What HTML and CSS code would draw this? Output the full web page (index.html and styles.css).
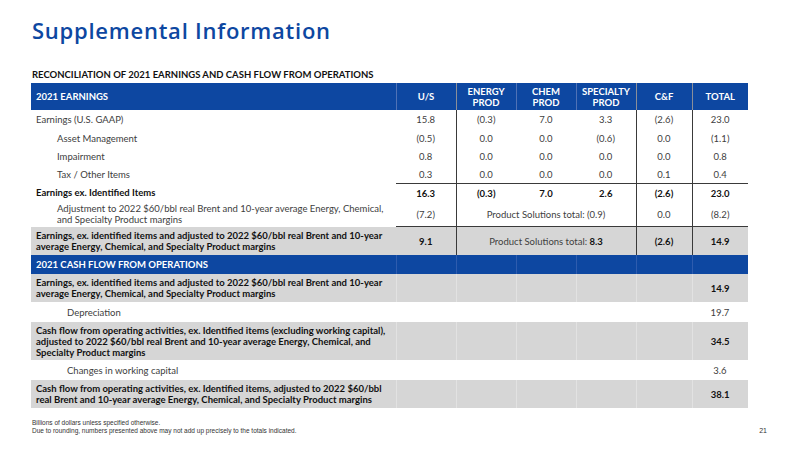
FILE: index.html
```html
<!DOCTYPE html>
<html lang="en">
<head>
    <meta charset="UTF-8">
    <meta name="viewport" content="width=device-width, initial-scale=1.0">
    <title>Supplemental Information</title>
    <link rel="stylesheet" href="styles.css">
</head>
<body>
    <div class="slide">
        <h1 class="title">Supplemental Information</h1>
        <h2 class="subtitle">RECONCILIATION OF 2021 EARNINGS AND CASH FLOW FROM OPERATIONS</h2>

        <table class="recon">
            <colgroup>
                <col class="col-label">
                <col class="col-seg">
                <col class="col-seg">
                <col class="col-seg">
                <col class="col-seg">
                <col class="col-end">
                <col class="col-end">
            </colgroup>
            <thead>
                <tr class="head">
                    <th class="label">2021 EARNINGS</th>
                    <th class="soft">U/S</th>
                    <th class="split">ENERGY<br>PROD</th>
                    <th class="soft">CHEM<br>PROD</th>
                    <th class="soft">SPECIALTY<br>PROD</th>
                    <th class="split">C&amp;F</th>
                    <th class="split">TOTAL</th>
                </tr>
            </thead>
            <tbody class="earnings">
                <tr class="row first">
                    <td class="label">Earnings (U.S. GAAP)</td>
                    <td>15.8</td>
                    <td class="split">(0.3)</td>
                    <td>7.0</td>
                    <td>3.3</td>
                    <td class="split">(2.6)</td>
                    <td class="split">23.0</td>
                </tr>
                <tr class="row">
                    <td class="label indent">Asset Management</td>
                    <td>(0.5)</td>
                    <td class="split">0.0</td>
                    <td>0.0</td>
                    <td>(0.6)</td>
                    <td class="split">0.0</td>
                    <td class="split">(1.1)</td>
                </tr>
                <tr class="row">
                    <td class="label indent">Impairment</td>
                    <td>0.8</td>
                    <td class="split">0.0</td>
                    <td>0.0</td>
                    <td>0.0</td>
                    <td class="split">0.0</td>
                    <td class="split">0.8</td>
                </tr>
                <tr class="row ruled">
                    <td class="label indent">Tax / Other Items</td>
                    <td>0.3</td>
                    <td class="split">0.0</td>
                    <td>0.0</td>
                    <td>0.0</td>
                    <td class="split">0.1</td>
                    <td class="split">0.4</td>
                </tr>
                <tr class="row strong">
                    <td class="label">Earnings ex. Identified Items</td>
                    <td>16.3</td>
                    <td class="split">(0.3)</td>
                    <td>7.0</td>
                    <td>2.6</td>
                    <td class="split">(2.6)</td>
                    <td class="split">23.0</td>
                </tr>
                <tr class="row tall ruled">
                    <td class="label indent">Adjustment to 2022 $60/bbl real Brent and 10-year average Energy, Chemical, and Specialty Product margins</td>
                    <td>(7.2)</td>
                    <td class="split" colspan="3">Product Solutions total: (0.9)</td>
                    <td class="split">0.0</td>
                    <td class="split">(8.2)</td>
                </tr>
                <tr class="row shaded strong">
                    <td class="label">Earnings, ex. identified items and adjusted to 2022 $60/bbl real Brent and 10-year average Energy, Chemical, and Specialty Product margins</td>
                    <td>9.1</td>
                    <td class="split plain" colspan="3">Product Solutions total: <b>8.3</b></td>
                    <td class="split">(2.6)</td>
                    <td class="split">14.9</td>
                </tr>
            </tbody>
            <tbody class="cashflow">
                <tr class="section">
                    <td class="label">2021 CASH FLOW FROM OPERATIONS</td>
                    <td></td><td></td><td></td><td></td><td></td><td></td>
                </tr>
                <tr class="row shaded strong">
                    <td class="label">Earnings, ex. identified items and adjusted to 2022 $60/bbl real Brent and 10-year average Energy, Chemical, and Specialty Product margins</td>
                    <td></td><td></td><td></td><td></td><td></td>
                    <td class="total">14.9</td>
                </tr>
                <tr class="row">
                    <td class="label deep">Depreciation</td>
                    <td></td><td></td><td></td><td></td><td></td>
                    <td class="total">19.7</td>
                </tr>
                <tr class="row shaded strong triple">
                    <td class="label">Cash flow from operating activities, ex. Identified items (excluding working capital), adjusted to 2022 $60/bbl real Brent and 10-year average Energy, Chemical, and Specialty Product margins</td>
                    <td></td><td></td><td></td><td></td><td></td>
                    <td class="total">34.5</td>
                </tr>
                <tr class="row">
                    <td class="label deep">Changes in working capital</td>
                    <td></td><td></td><td></td><td></td><td></td>
                    <td class="total">3.6</td>
                </tr>
                <tr class="row shaded strong">
                    <td class="label">Cash flow from operating activities, ex. Identified items, adjusted to 2022 $60/bbl real Brent and 10-year average Energy, Chemical, and Specialty Product margins</td>
                    <td></td><td></td><td></td><td></td><td></td>
                    <td class="total">38.1</td>
                </tr>
            </tbody>
        </table>

        <div class="footer">
            <div class="notes">
                <p>Billions of dollars unless specified otherwise.</p>
                <p>Due to rounding, numbers presented above may not add up precisely to the totals indicated.</p>
            </div>
            <span class="page-no">21</span>
        </div>
    </div>
</body>
</html>
```

FILE: styles.css
```css
body {
    margin: 0;
    background-color: #fff;
    font-family: Lato, "Open Sans", Arial, sans-serif;
}
.slide {
    width: 800px;
    height: 450px;
    padding: 14px 0 0 32px;
    box-sizing: border-box;
}
.title {
    margin: 0;
    font-family: "Open Sans", Arial, sans-serif;
    font-size: 22px;
    font-weight: 600;
    line-height: 32px;
    letter-spacing: 0.75px;
    color: #0d47a1;
}
.subtitle {
    margin: 23px 0 3px 0;
    font-size: 9.5px;
    font-weight: 700;
    line-height: 11px;
    color: #111;
}
.recon {
    margin-left: -1px;
    width: 717px;
    table-layout: fixed;
    border-collapse: collapse;
    font-size: 9.5px;
    line-height: 11px;
    color: #404040;
}
.col-label { width: 365px; }
.col-seg { width: 60px; }
.col-end { width: 56px; }

.recon th, .recon td {
    padding: 0;
    text-align: center;
    vertical-align: middle;
}
.recon .label {
    text-align: left;
    padding-left: 5px;
}
.recon .indent { padding-left: 26px; }
.recon .deep { padding-left: 36px; }

/* header bar */
.head th {
    height: 27px;
    background-color: #0d47a1;
    color: #fff;
    font-weight: 700;
    font-size: 9.5px;
    line-height: 11px;
}
.head th.soft { border-left: 1px solid #4f72b6; }
.head th.split { border-left: 1px solid #8a8f99; }

/* earnings block */
.row td { height: 18px; }
.row.first td { height: 19px; }
.row.tall td { height: 24px; }
.earnings td.split { border-left: 1px solid #3a3a3a; }
.ruled td + td { border-bottom: 1px solid #3a3a3a; }
.strong td { color: #111; font-weight: 700; }
.strong td.plain { color: #404040; font-weight: 400; }
.strong td.plain b { color: #111; }
.shaded td {
    height: 28px;
    background-color: #d6d6d6;
}

/* cash flow block */
.section td {
    height: 19px;
    background-color: #0d47a1;
    color: #fff;
    font-weight: 700;
}
.section td + td { border-left: 1px solid #2e5cae; }
.cashflow .row td { border-bottom: 1px solid #fff; }
.cashflow .shaded td + td { border-left: 1px solid #e2e2e2; }
.cashflow .triple td { height: 38px; }

/* footer */
.footer {
    display: flex;
    justify-content: space-between;
    align-items: flex-end;
    width: 735px;
    margin-top: 10px;
    font-family: "Liberation Sans", Arial, sans-serif;
    font-size: 6.5px;
    line-height: 8px;
    color: #333;
}
.notes p { margin: 0; }
.page-no { font-size: 7px; }
```
